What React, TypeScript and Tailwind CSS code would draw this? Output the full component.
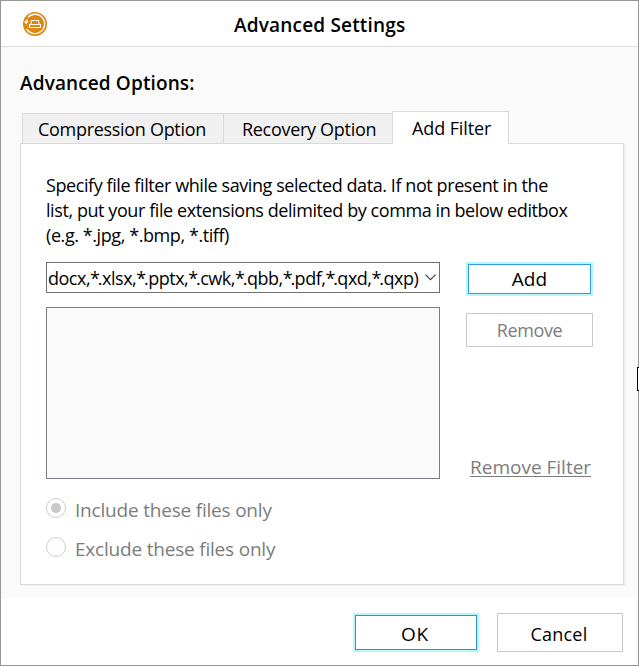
import { Fragment } from "react";

const TABS = [
  { label: "Compression Option", className: "w-[201px] h-[30px] border-l pl-[15px] tracking-[-0.3px]" },
  { label: "Recovery Option", className: "w-[169px] h-[30px] border-l pl-[18px] tracking-[-0.3px]" },
];

const EXTENSIONS = [".xlsx,", ".pptx,", ".cwk,", ".qbb,", ".pdf,", ".qxd,", ".qxp)"];

const FILTERS = [
  { label: "Include these files only", checked: true },
  { label: "Exclude these files only", checked: false },
];

function AppLogo() {
  return (
    <svg width="24" height="24" viewBox="0 0 24 24" fill="none">
      <circle cx="12" cy="12" r="12" fill="#e0850f" />
      <path d="M5 5.2A9.7 9.7 0 1 1 3.6 16.8" stroke="#fff" strokeWidth="1.3" />
      <path d="M0.8 9.2H5.6L3.2 12.6Z" fill="#fff" />
      <path d="M3.3 10.5L4 7.4" stroke="#fff" strokeWidth="1.5" />
      <path d="M8.5 8.5H15.5L16.3 12.5H17.5V15.5H6.5V12.5H7.7Z M6.5 12.5H17.5" stroke="#fff" strokeWidth="1.1" />
    </svg>
  );
}

export default function App() {
  return (
    <div className="flex flex-col w-[639px] h-[666px] overflow-hidden border border-[#969696] bg-white font-['Open_Sans','Noto_Sans',sans-serif] text-[18px] text-black">
      {/* Title bar */}
      <header className="relative flex items-center h-[46px] shrink-0 border-b border-[#dedede] pl-[22px]">
        <AppLogo />
        <h1 className="absolute left-[233px] top-[10px] text-[19px] leading-[28px] font-semibold whitespace-nowrap tracking-[0.18px]">
          Advanced Settings
        </h1>
      </header>

      <main className="h-[551px] shrink-0 bg-[#fafafa] pl-[19px] pt-[22px]">
        <h2 className="h-[28px] text-[19px] leading-[28px] font-semibold whitespace-nowrap tracking-[0.12px]">
          Advanced Options:
        </h2>

        {/* Tabs */}
        <div className="flex items-end h-[32px] mt-[14px] pl-[2px]">
          {TABS.map((tab) => (
            <div
              key={tab.label}
              className={`${tab.className} flex items-center border-t border-[#d9d9d9] bg-[#f0f0f0] pt-[1px] whitespace-nowrap`}
            >
              {tab.label}
            </div>
          ))}
          <div className="relative z-10 flex items-center w-[117px] h-[33px] -mb-px border border-b-0 border-[#d9d9d9] bg-white pl-[19px] tracking-[-0.1px] whitespace-nowrap">
            Add Filter
          </div>
        </div>

        <section className="flex flex-col w-[604px] h-[442px] border border-[#d9d9d9] bg-white shadow-[2px_1px_0_#f0f0f0] pl-[25px] pt-[29px]">
          <p className="text-[18px] leading-[25px] whitespace-nowrap tracking-[-0.42px]">
            Specify file filter while saving selected data. If not present in the
            <br />
            list, put your file extensions delimited by comma in below editbox
            <br />
            (e.g. *.jpg, *.bmp, *.tiff)
          </p>

          <div className="flex mt-[14px] gap-[26px]">
            <div className="flex flex-col w-[394px] gap-[14px]">
              <div className="flex items-center justify-between h-[31px] border border-[#707070] pl-[1px] pr-[3px]">
                <span className="pt-[2px] whitespace-nowrap tracking-[-0.49px]">
                  docx,
                  {EXTENSIONS.map((ext) => (
                    <Fragment key={ext}>
                      <span className="tracking-[-2.2px]">*</span>
                      {ext}
                    </Fragment>
                  ))}
                </span>
                <svg width="11" height="7" viewBox="0 0 11 7" fill="none" className="shrink-0">
                  <path d="M0.5 0.7L5.5 5.7L10.5 0.7" stroke="#404040" strokeWidth="1.2" />
                </svg>
              </div>
              <div className="h-[172px] border border-[#7a7e88] bg-[#fafafa]" />
            </div>

            <div className="flex flex-col w-[127px]">
              <button className="h-[34px] border-2 border-[#b5f7ff] text-[19px]">
                <span className="flex h-full items-center justify-center border border-[#3898e0]">Add</span>
              </button>
              <button className="h-[34px] mt-[17px] border border-[#c8c8c8] pt-px text-[#7c7c7c] tracking-[-0.4px]">
                Remove
              </button>
              <a className="mt-[107px] ml-[4px] w-[121px] h-[25px] text-[19px] leading-[26px] text-[#7c7c7c] underline underline-offset-2 decoration-1 whitespace-nowrap">
                Remove Filter
              </a>
            </div>
          </div>

          {/* Filter mode */}
          <div className="flex flex-col gap-[19px] mt-[19px] text-[19px] tracking-[-0.2px] text-[#7c7c7c]">
            {FILTERS.map((f) => (
              <label key={f.label} className="flex items-center gap-[9px] h-[20px]">
                <span className="flex items-center justify-center w-5 h-5 rounded-full border border-[#cccccc]">
                  {f.checked && <span className="w-[10px] h-[10px] rounded-full bg-[#c8c8c8]" />}
                </span>
                <span className="pt-[5px] whitespace-nowrap">{f.label}</span>
              </label>
            ))}
          </div>
        </section>
      </main>

      <footer className="flex h-[66px] border-r-2 border-[#fafafa] pt-[15px] pl-[352px] gap-[18px]">
        <button className="w-[126px] h-[39px] border-2 border-[#b5f7ff] text-[19px]">
          <span className="flex h-full items-center justify-center border border-[#3390d8] pt-[3px] pr-[2px] tracking-[0.8px]">
            OK
          </span>
        </button>
        <button className="w-[126px] h-[39px] border border-[#c8c8c8] pt-[3px] pr-[2px] tracking-[0.2px]">Cancel</button>
      </footer>

      {/* Text caret at the window's edge */}
      <div className="absolute left-[637px] top-[367px] w-[2px] h-[24px] border border-r-0 border-black bg-white" />
    </div>
  );
}
